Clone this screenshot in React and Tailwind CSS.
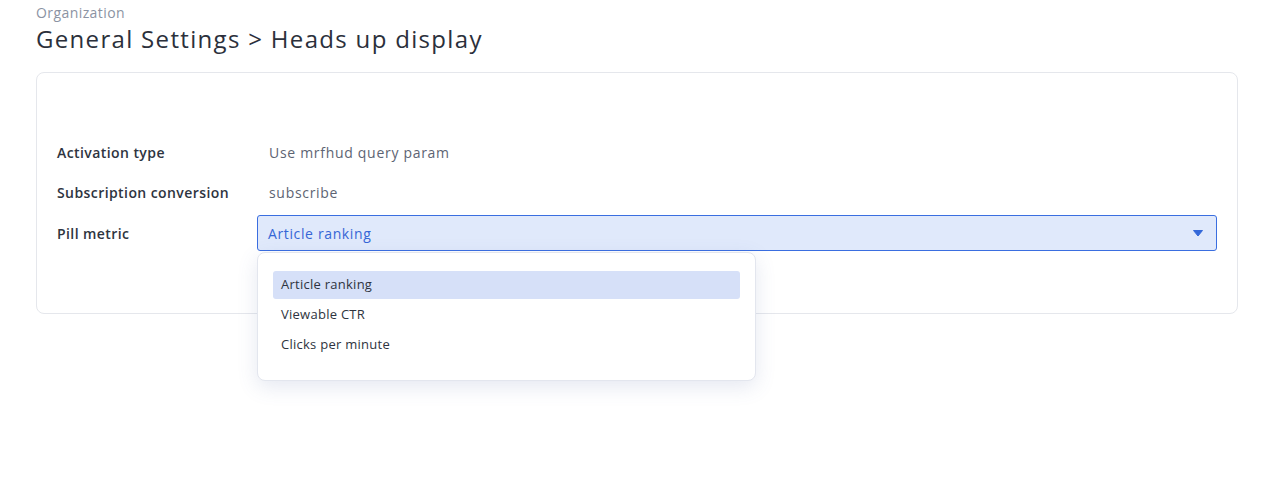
import React from "react";

const font = { fontFamily: '"Open Sans", "Noto Sans", sans-serif' };

function Caret() {
  return (
    <svg width="10" height="7" viewBox="0 0 10 7" className="shrink-0">
      <path d="M0.5 0.5 H9.5 L5 6 Z" fill="#3468d9" stroke="#3468d9" strokeLinejoin="round" />
    </svg>
  );
}

export default function App() {
  const items = ["Article ranking", "Viewable CTR", "Clicks per minute"];
  return (
    <div className="min-h-[477px] w-full bg-white pl-9 pr-8 pt-[3px]" style={font}>
      <div className="text-[14px] leading-[20px] tracking-[0.03em] text-[#8b93a3]">Organization</div>
      <h1 className="text-[24px] leading-[32px] tracking-[0.055em] text-[#2b303b]">General Settings &gt; Heads up display</h1>
      <div className="mt-[17px] h-[242px] rounded-[8px] border border-[#e5e7ec] px-5 pt-[59px]">
        <div className="flex h-[40px] items-center text-[14px]">
          <div className="w-[212px] font-semibold tracking-[0.03em] text-[#2e3440]">Activation type</div>
          <div className="tracking-[0.05em] text-[#5d6473]">Use mrfhud query param</div>
        </div>
        <div className="flex h-[40px] items-center text-[14px]">
          <div className="w-[212px] font-semibold tracking-[0.03em] text-[#2e3440]">Subscription conversion</div>
          <div className="tracking-[0.05em] text-[#5d6473]">subscribe</div>
        </div>
        <div className="mt-px flex h-[40px] items-center text-[14px]">
          <div className="w-[200px] font-semibold tracking-[0.03em] text-[#2e3440]">Pill metric</div>
          <div className="relative flex-1">
            <div className="flex h-[36px] items-center justify-between rounded-[3px] border border-[#3a6ee0] bg-[#e0e9fb] pl-[10px] pr-[13px]">
              <span className="tracking-[0.045em] text-[#3566d6]">Article ranking</span>
              <Caret />
            </div>
            <div className="absolute left-0 top-[37px] z-10 h-[129px] w-[499px] rounded-[8px] border border-[#e3e6ee] bg-white px-[15px] pt-[18px] shadow-[0_6px_20px_rgba(80,100,160,0.15)]">
              {items.map((t, i) => (
                <div
                  key={t}
                  className={`flex h-[28px] items-center rounded-[3px] px-[8px] text-[13px] font-medium tracking-[0.02em] text-[#2e3440] ${i === 0 ? "bg-[#d6e0f8]" : ""} ${i > 0 ? "mt-[2px]" : ""}`}
                >
                  {t}
                </div>
              ))}
            </div>
          </div>
        </div>
      </div>
    </div>
  );
}
